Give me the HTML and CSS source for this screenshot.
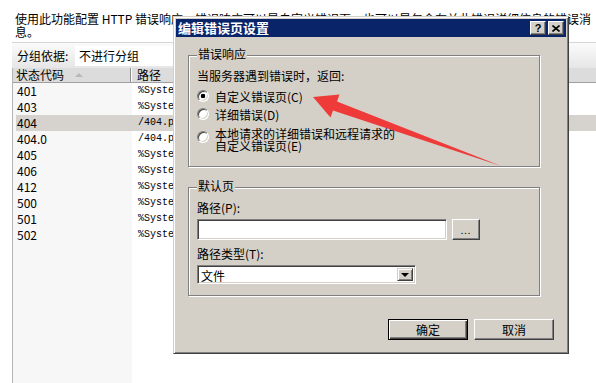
FILE: index.html
```html
<!DOCTYPE html>
<html lang="zh-CN">
<head>
  <meta charset="UTF-8">
  <title>HTTP 错误页</title>
  <link rel="stylesheet" href="styles.css">
</head>
<body>
  <div class="page">
    <p class="desc">使用此功能配置 HTTP 错误响应。错误响应可以是自定义错误页，也可以是包含有关此错误详细信息的错误消息。</p>
    <div class="groupbar">
      <span class="group-label">分组依据:</span>
      <span class="group-combo">不进行分组</span>
    </div>
    <div class="list">
      <div class="list-head">
        <div class="head-code">状态代码<span class="sort"></span></div>
        <div class="head-path">路径</div>
      </div>
      <div class="row"><span class="code">401</span><span class="path">%SystemDrive%\inetpub\custerr\&lt;LANGUAGE-TAG&gt;\401.htm</span></div>
      <div class="row"><span class="code">403</span><span class="path">%SystemDrive%\inetpub\custerr\&lt;LANGUAGE-TAG&gt;\403.htm</span></div>
      <div class="row selected"><span class="code">404</span><span class="path">/404.php</span></div>
      <div class="row"><span class="code">404.0</span><span class="path">/404.php</span></div>
      <div class="row"><span class="code">405</span><span class="path">%SystemDrive%\inetpub\custerr\&lt;LANGUAGE-TAG&gt;\405.htm</span></div>
      <div class="row"><span class="code">406</span><span class="path">%SystemDrive%\inetpub\custerr\&lt;LANGUAGE-TAG&gt;\406.htm</span></div>
      <div class="row"><span class="code">412</span><span class="path">%SystemDrive%\inetpub\custerr\&lt;LANGUAGE-TAG&gt;\412.htm</span></div>
      <div class="row"><span class="code">500</span><span class="path">%SystemDrive%\inetpub\custerr\&lt;LANGUAGE-TAG&gt;\500.htm</span></div>
      <div class="row"><span class="code">501</span><span class="path">%SystemDrive%\inetpub\custerr\&lt;LANGUAGE-TAG&gt;\501.htm</span></div>
      <div class="row"><span class="code">502</span><span class="path">%SystemDrive%\inetpub\custerr\&lt;LANGUAGE-TAG&gt;\502.htm</span></div>
    </div>
  </div>

  <div class="dialog">
    <div class="titlebar">
      <span class="title">编辑错误页设置</span>
      <span class="cap-btn help">?</span>
      <span class="cap-btn">
        <svg width="8" height="7" viewBox="0 0 8 7"><path d="M0.5 0.5 L7.5 6.5 M7.5 0.5 L0.5 6.5" stroke="#000" stroke-width="1.6" fill="none"/></svg>
      </span>
    </div>
    <div class="dialog-body">
      <div class="group group-response">
        <span class="legend">错误响应</span>
        <p class="prompt">当服务器遇到错误时，返回:</p>
        <div class="option first"><span class="radio checked"></span><span>自定义错误页(C)</span></div>
        <div class="option"><span class="radio"></span><span>详细错误(D)</span></div>
        <div class="option multi"><span class="radio"></span><span>本地请求的详细错误和远程请求的<br>自定义错误页(E)</span></div>
      </div>

      <div class="group group-default">
        <span class="legend">默认页</span>
        <p class="field-label">路径(P):</p>
        <div class="input-row">
          <span class="textbox"></span>
          <span class="button browse">...</span>
        </div>
        <p class="field-label second">路径类型(T):</p>
        <div class="select">
          <span class="select-text">文件</span>
          <span class="select-arrow"><span class="tri"></span></span>
        </div>
      </div>

      <div class="actions">
        <span class="button default">确定</span>
        <span class="button">取消</span>
      </div>
    </div>
  </div>

  <svg class="arrow" width="596" height="383" viewBox="0 0 596 383">
    <polygon points="313,97 339.5,94.5 337,101.5 501,166 333,110.5 330.5,117.5" fill="#ef3a3a"/>
  </svg>
</body>
</html>
```

FILE: styles.css
```css
* {
  box-sizing: border-box;
}

body {
  margin: 0;
  width: 596px;
  height: 383px;
  overflow: hidden;
  position: relative;
  font-family: "Noto Sans CJK SC", "Noto Sans", sans-serif;
  font-size: 12px;
  color: #000;
  background: #fff;
}

/* fondo: lista de páginas de error */
.page {
  padding-top: 12px;
}

.desc {
  margin: 0 0 0 15px;
  width: 580px;
  line-height: 13px;
}

.groupbar {
  margin: 4px 0 0 12px;
  height: 26px;
  display: flex;
  align-items: center;
  border-top: 1px solid #d6d6d6;
  background: linear-gradient(#fbfbfb, #e6e6e6);
}

.group-label {
  width: 63px;
  padding-left: 5px;
}

.group-combo {
  width: 110px;
  height: 20px;
  line-height: 20px;
  padding-left: 4px;
  background: #fff;
}

.list {
  margin-left: 12px;
  height: 315px;
  border-left: 1px solid #b4b4b4;
  background: linear-gradient(to right, #f7f7f7 119px, #fff 119px);
}

.list-head {
  display: flex;
  height: 15px;
  line-height: 14px;
  background: #dcdcdc;
  border-bottom: 1px solid #a0a0a0;
}

.head-code {
  width: 118px;
  padding-left: 3px;
  border-right: 1px solid #8c8c8c;
  box-shadow: 1px 0 0 #fff;
}

.sort {
  display: inline-block;
  width: 0;
  height: 0;
  margin-left: 11px;
  vertical-align: 3px;
  border-left: 4px solid transparent;
  border-right: 4px solid transparent;
  border-bottom: 4px solid #b8b8b8;
}

.head-path {
  padding-left: 6px;
}

.row {
  display: flex;
  height: 16px;
  line-height: 16px;
  margin-left: 3px;
}

.row.selected {
  background: #d6d3ce;
}

.code {
  width: 122px;
  flex: none;
  padding-left: 1px;
}

.path {
  font-family: "Liberation Mono", monospace;
  font-size: 10px;
  white-space: nowrap;
}

/* ventana del diálogo */
.dialog {
  position: absolute;
  left: 173px;
  top: 16px;
  width: 396px;
  height: 338px;
  padding: 2px;
  background: #d4d0c8;
  border: 1px solid;
  border-color: #d4d0c8 #404040 #404040 #d4d0c8;
  box-shadow: inset 1px 1px 0 #fff, inset -1px -1px 0 #808080;
}

.titlebar {
  height: 18px;
  display: flex;
  align-items: center;
  gap: 2px;
  padding: 0 2px;
  background: #0a246a;
  color: #fff;
}

.title {
  font-size: 13px;
  font-weight: bold;
  line-height: 18px;
  margin-right: auto;
}

.cap-btn {
  width: 16px;
  height: 14px;
  display: flex;
  align-items: center;
  justify-content: center;
  background: #d4d0c8;
  border: 1px solid;
  border-color: #fff #404040 #404040 #fff;
  box-shadow: inset -1px -1px 0 #808080;
  color: #000;
}

.cap-btn.help {
  font-family: "Liberation Sans", sans-serif;
  font-weight: bold;
  font-size: 11px;
  line-height: 12px;
}

.dialog-body {
  padding: 0 12px 0 12px;
}

.group {
  position: relative;
  width: 352px;
  padding: 13px 8px 14px 8px;
  border: 1px solid #808080;
  box-shadow: inset 1px 1px 0 #fff, 1px 1px 0 #fff;
}

.group-response {
  margin-top: 18px;
}

.group-default {
  margin-top: 20px;
  padding-bottom: 11px;
}

.legend {
  position: absolute;
  top: -9px;
  left: 8px;
  padding: 0 1px;
  line-height: 14px;
  background: #d4d0c8;
}

.prompt,
.field-label {
  margin: 0;
  line-height: 14px;
}

.field-label.second {
  margin-top: 7px;
}

.option {
  display: flex;
  align-items: center;
  gap: 6px;
  height: 18px;
}

.option.first {
  margin-top: 4px;
}

.option.multi {
  align-items: flex-start;
  height: 24px;
  margin-top: 5px;
  line-height: 12px;
}

.option.multi .radio {
  margin-top: 3px;
}

.radio {
  flex: none;
  width: 12px;
  height: 12px;
  border-radius: 50%;
  background: #fff;
  border: 1px solid;
  border-color: #808080 #fff #fff #808080;
  box-shadow: inset 1px 1px 0 #404040, inset -1px -1px 0 #d4d0c8;
}

.radio.checked {
  background: radial-gradient(circle, #000 2px, #fff 2.6px);
}

.input-row {
  display: flex;
  gap: 5px;
  margin-top: 4px;
}

.textbox {
  width: 250px;
  height: 21px;
  background: #fff;
  border: 1px solid;
  border-color: #808080 #fff #fff #808080;
  box-shadow: inset 1px 1px 0 #404040, inset -1px -1px 0 #d4d0c8;
}

.button {
  display: flex;
  align-items: center;
  justify-content: center;
  height: 21px;
  background: #d4d0c8;
  border: 1px solid;
  border-color: #fff #404040 #404040 #fff;
  box-shadow: inset -1px -1px 0 #808080;
}

.button.browse {
  width: 28px;
  font-size: 9px;
  letter-spacing: 1px;
  line-height: 12px;
  padding-top: 3px;
}

.select {
  display: flex;
  width: 219px;
  height: 19px;
  margin-top: 4px;
  padding: 2px;
  background: #fff;
  border: 1px solid;
  border-color: #808080 #fff #fff #808080;
  box-shadow: inset 1px 1px 0 #404040, inset -1px -1px 0 #d4d0c8;
}

.select-text {
  flex: 1;
  line-height: 15px;
  padding-left: 1px;
}

.select-arrow {
  width: 16px;
  display: flex;
  align-items: center;
  justify-content: center;
  background: #d4d0c8;
  border: 1px solid;
  border-color: #d4d0c8 #404040 #404040 #d4d0c8;
  box-shadow: inset 1px 1px 0 #fff, inset -1px -1px 0 #808080;
}

.tri {
  width: 0;
  height: 0;
  border-left: 4px solid transparent;
  border-right: 4px solid transparent;
  border-top: 4px solid #000;
}

.actions {
  display: flex;
  justify-content: flex-end;
  gap: 6px;
  margin-top: 23px;
}

.actions .button {
  width: 80px;
}

.button.default {
  border-color: #000;
  box-shadow: inset 1px 1px 0 #fff, inset -1px -1px 0 #404040, inset -2px -2px 0 #808080;
}

.arrow {
  position: absolute;
  left: 0;
  top: 0;
  pointer-events: none;
}
```
